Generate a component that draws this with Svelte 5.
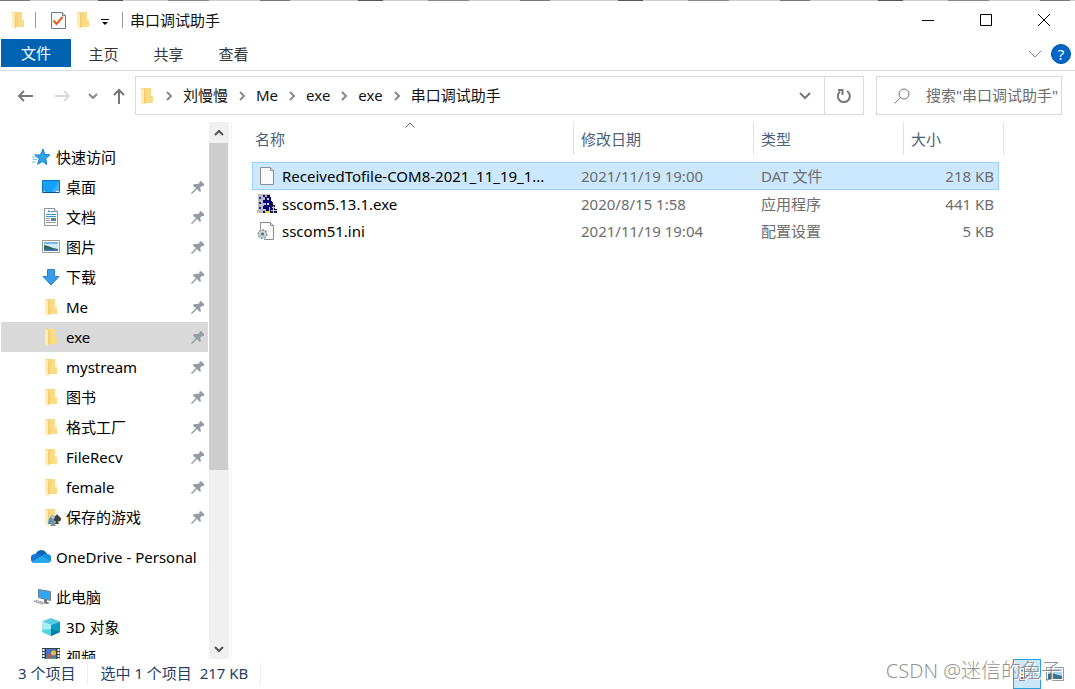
<script>
  const tabs = ['主页', '共享', '查看'];
  const crumbs = ['刘慢慢', 'Me', 'exe', 'exe', '串口调试助手'];
  const places = [
    { name: '快速访问', icon: 'star', root: true },
    { name: '桌面', icon: 'desktop', pin: true },
    { name: '文档', icon: 'doc', pin: true },
    { name: '图片', icon: 'picture', pin: true },
    { name: '下载', icon: 'download', pin: true },
    { name: 'Me', icon: 'folder', pin: true },
    { name: 'exe', icon: 'folder', pin: true, active: true },
    { name: 'mystream', icon: 'folder', pin: true },
    { name: '图书', icon: 'folder', pin: true },
    { name: '格式工厂', icon: 'folder', pin: true },
    { name: 'FileRecv', icon: 'folder', pin: true },
    { name: 'female', icon: 'folder', pin: true },
    { name: '保存的游戏', icon: 'games', pin: true },
    { name: 'OneDrive - Personal', icon: 'cloud', root: true },
    { name: '此电脑', icon: 'pc', root: true },
    { name: '3D 对象', icon: 'cube' },
    { name: '视频', icon: 'video' }
  ];
  const files = [
    { name: 'ReceivedTofile-COM8-2021_11_19_1...', date: '2021/11/19 19:00', type: 'DAT 文件', size: '218 KB', icon: 'file' },
    { name: 'sscom5.13.1.exe', date: '2020/8/15 1:58', type: '应用程序', size: '441 KB', icon: 'app' },
    { name: 'sscom51.ini', date: '2021/11/19 19:04', type: '配置设置', size: '5 KB', icon: 'ini' }
  ];
  let selected = $state(0);
</script>

{#snippet icon(kind)}
  <svg class="icon" viewBox="0 0 20 20" aria-hidden="true">
    {#if kind === 'folder' || kind === 'games'}
      <path d="M4 2h10v8h2v7H5z" fill="#f7d57c" />
      <path d="M10 2h4v8h2v7h-6z" fill="#fbdc86" />
      <path d="M4 2l4 2v14l-1 1-3-2z" fill="#ffebb3" />
      <path d="M7.500 4v14" stroke="#f3cd6b" />
      {#if kind === 'games'}
        <path d="M8 12l3-4 2 1-3 8H7z" fill="#3b8fd0" />
        <path d="M16 7c-1 2-4 3-4 5 0 2 2 3 3 2l-1 3h4l-1-3c2 1 3 0 3-2s-3-3-4-5z" fill="#3c4146" />
        <circle cx="12" cy="10" r="2" fill="#b5c0c8" />
        <path d="M11 12h2l1 5 1 2H9l1-2z" fill="#84919a" />
      {/if}
    {:else if kind === 'star'}
      <path d="M12 2l1.800 5.500 5.200.300-4.200 3.700 1 6-4.300-2.900-5 2.700 1.800-5.500L4 8h5.500z" fill="#2ea3ea" stroke="#1683cb" />
      <path d="M3 7.500h4M1 10h5M2 12.500h4M1 15h4" stroke="#70c4f5" />
    {:else if kind === 'desktop'}
      <path d="M1.500 3.500h17v12h-17z" fill="#18a0f6" stroke="#0877c1" />
      <path d="M11 15L18 5v10z" fill="#42b4fb" />
      <path d="M2 15.500h16" stroke="#084f91" />
      <path d="M3 14.500h1M15 14.500h3" stroke="#fff" />
    {:else if kind === 'doc'}
      <path d="M3.500 1.500h10l3 3v14h-13z" fill="#fff" stroke="#8e9395" />
      <path d="M13.500 1.500v3h3" fill="#eee" stroke="#8e9395" />
      <path d="M7 5.500l1-2 1 2M10 4.500h3M5 7.500h10M5 9.500h10" stroke="#2e96d4" fill="none" />
      <path d="M5 11.500h4M5 13.500h4M5 15.500h10" stroke="#999" />
      <path d="M10 11h5v3h-5z" fill="#4f899d" />
    {:else if kind === 'picture'}
      <path d="M1.500 3.500h17v12h-17z" fill="#fff" stroke="#999" />
      <path d="M3 5h14v9H3z" fill="#cdeaf9" />
      <path d="M3 5h14v2H3z" fill="#76b8ef" />
      <path d="M3 8l4 1 5 2 5 1v1H3z" fill="#38634f" />
      <path d="M3 12h14v2H3z" fill="#3b75ac" />
    {:else if kind === 'download'}
      <path d="M6.500 2.500h7v7h4.500L10 18 2 9.500h4.500z" fill="#3b9ae9" stroke="#2880ce" />
    {:else if kind === 'cloud'}
      <path d="M4.500 8a6 6 0 0 1 11-2A5 5 0 0 1 17 8L8 14z" fill="#0364b8" />
      <path d="M4 16a4.500 4.500 0 0 1 0-9C7 6 9 8 12 10l-7 6z" fill="#0f78d4" />
      <path d="M10.500 9.500C12 7 14 6 16 7a4.500 4.500 0 0 1 0 9h-3z" fill="#1490df" />
      <path d="M1 14.500l9.500-5.500L19.500 14c-.7 1.500-2 2-3.500 2H4.500C3 16 1.500 15.500 1 14.500z" fill="#28a8ea" />
    {:else if kind === 'pc'}
      <path d="M7.500 2.500l12 2v9l-12-3z" fill="#31a8f2" stroke="#6f7e88" />
      <path d="M13 12l3 1v2l3 1-3 1-5-1 2-1z" fill="#67747b" />
      <path d="M1 14l4-1 10 3-4 2z" fill="#c6cace" />
      <path d="M3 14.500l9 2M5 13.500l8 2" stroke="#8f969a" stroke-dasharray="1 1" />
    {:else if kind === 'cube'}
      <path d="M10 1l9 3.500-9 3.500-9-3.500z" fill="#57cde2" />
      <path d="M1 4.500L10 8v11l-9-4z" fill="#a7eef2" />
      <path d="M19 4.500L10 8v11l9-4z" fill="#079ec2" />
      <path d="M1 13l9-1v7l-9-4z" fill="#53d4df" />
      <path d="M10 12l9 3-9 4z" fill="#007ca6" />
    {:else if kind === 'video'}
      <path d="M1 1h18v17H1z" fill="#3b4043" />
      <path d="M2.500 2v16M17.500 2v16" stroke="#fff" stroke-width="2" stroke-dasharray="2 1" />
      <path d="M5 2h10v12H5z" fill="#4776c4" />
      <circle cx="12.500" cy="6" r="2.500" fill="#edbd38" />
      <circle cx="8" cy="9" r="2" fill="#d34c4b" />
      <path d="M5 11h10v2H5z" fill="#60a350" />
    {:else if kind === 'file' || kind === 'ini'}
      <path d="M3.500 1.500h10l3 3v14h-13z" fill="#fafafa" stroke="#8c8f91" />
      <path d="M13.500 1.500v3h3" fill="#ddd" stroke="#8c8f91" />
      {#if kind === 'ini'}
        <path d="M1 8h6v11H1z" fill="#fff" />
        <circle cx="5.500" cy="13" r="4" fill="#bcc6cc" stroke="#89969e" stroke-width="2" stroke-dasharray="2 1" />
        <circle cx="5.500" cy="13" r="3.500" fill="#c9d2d7" />
        <circle cx="5.500" cy="13" r="1.500" fill="#526773" />
      {/if}
    {:else if kind === 'app'}
      <path d="M1 0h12v19H0V16h1z" fill="#bdbdbd" />
      <path d="M2 3h2v2H2zM2 8h2v2H2zM2 13h2v2H2z" fill="#2020e8" />
      <path d="M6 1h2v2H6zM10 1h3v2h1v4h1v6h-3v6H9v-4H7v-4h2V9H6V6h2V3h2z" fill="#080875" />
      <path d="M6 12h2v3H6zM6 17h2v2H6z" fill="#080875" />
      <path d="M10 4h2v2h-2zM10 9h2v2h-2z" fill="#d1d1d1" />
      <path d="M9 17h4v2H9z" fill="#f5df17" />
      <path d="M13 10h2V8h1v3h2v4h2v4h-7z" fill="#14144c" />
      <path d="M15 13.500h3M14 16.500h6M16.500 12v7" stroke="#c7c7c7" />
    {/if}
  </svg>
{/snippet}

{#snippet chevron()}
  <svg class="chev" viewBox="0 0 8 10" aria-hidden="true"><path d="M2 1l4 4-4 4" /></svg>
{/snippet}

<div class="window">
  <div class="strip"></div>
  <header class="title">
    {@render icon('folder')}
    <i class="bar"></i>
    <button class="quick" aria-label="属性">
      <svg width="16" height="20" viewBox="0 0 16 20"><path d="M1.500 2.500h11l3 3v13h-14z" fill="#f7f8fa" stroke="#777c82" /><path d="M12.500 2.500v3h3" fill="#ddd" stroke="#777c82" /><path d="M3.500 10.500l3 3.500 6-7" fill="none" stroke="#f05a1a" stroke-width="2" /></svg>
    </button>
    <button class="quick" aria-label="新建文件夹">{@render icon('folder')}</button>
    <button class="quick drop" aria-label="自定义"><svg width="8" height="8" viewBox="0 0 8 8"><path d="M0 1.500h8" stroke="#000" /><path d="M1 4h6L4 7z" /></svg></button>
    <i class="bar second"></i>
    <h1>串口调试助手</h1>
    <div class="controls">
      <button aria-label="最小化"><svg viewBox="0 0 14 14"><path d="M1 7.500h12" /></svg></button>
      <button aria-label="最大化"><svg viewBox="0 0 14 14"><path d="M1.500 1.500h11v11h-11z" /></svg></button>
      <button aria-label="关闭"><svg viewBox="0 0 14 14"><path d="M1 1l12 12M13 1L1 13" /></svg></button>
    </div>
  </header>

  <nav class="ribbon">
    <button class="filetab">文件</button>
    {#each tabs as t}<button class="tab">{t}</button>{/each}
    <button class="expand" aria-label="展开功能区"><svg width="14" height="8" viewBox="0 0 14 8"><path d="M1 1l6 6 6-6" fill="none" stroke="#8a8a8a" /></svg></button>
    <button class="help" aria-label="帮助">?</button>
  </nav>

  <div class="address">
    <div class="arrows">
      <button aria-label="后退"><svg width="16" height="14" viewBox="0 0 16 14"><path d="M16 7H2M7 2L2 7l5 5" stroke="#777" /></svg></button>
      <button aria-label="前进"><svg width="16" height="14" viewBox="0 0 16 14"><path d="M0 7h14M9 2l5 5-5 5" stroke="#d9d9d9" /></svg></button>
      <button class="small" aria-label="最近位置"><svg width="10" height="6" viewBox="0 0 10 6"><path d="M1 1l4 4 4-4" stroke="#888" /></svg></button>
      <button class="small" aria-label="向上"><svg width="14" height="16" viewBox="0 0 14 16"><path d="M7 16V2M2 7l5-5 5 5" stroke="#777" /></svg></button>
    </div>
    <div class="path">
      {@render icon('folder')}
      {#each crumbs as c}{@render chevron()}<a href="#path">{c}</a>{/each}
      <button class="history" aria-label="历史记录"><svg width="12" height="8" viewBox="0 0 12 8"><path d="M1 1l5 5 5-5" stroke="#777" stroke-width="2" fill="none" /></svg></button>
      <button class="refresh" aria-label="刷新"><svg width="16" height="16" viewBox="0 0 16 16"><path d="M11 3a6 6 0 1 1-7 .500M2 2h4.500v5" fill="none" stroke="#777" stroke-width="2" /></svg></button>
    </div>
    <label class="search">
      <svg width="16" height="16" viewBox="0 0 16 16"><circle cx="10" cy="6" r="5" /><path d="M6.500 9.500L.500 15.500" /></svg>
      <input type="text" aria-label="搜索" placeholder={'搜索"串口调试助手"'} />
    </label>
  </div>

  <div class="body">
    <nav class="places">
      {#each places as p}
        <a href="#place" class:root={p.root} class:active={p.active}>
          {@render icon(p.icon)}
          <span>{p.name}</span>
          {#if p.pin}
            <svg class="pin" viewBox="0 0 14 14" aria-hidden="true"><path d="M8 2l2-1 3 3v2h-2L9 8l1 3-1 1-3-3-5 5-1-1 5-5-3-2 1-2h3l3-1z" /></svg>
          {/if}
        </a>
      {/each}
    </nav>
    <div class="scroll">
      <button aria-label="向上滚动"><svg width="10" height="8" viewBox="0 0 10 8"><path d="M1 6l4-4 4 4" /></svg></button>
      <div class="track"><div class="thumb"></div></div>
      <button aria-label="向下滚动"><svg width="10" height="8" viewBox="0 0 10 8"><path d="M1 2l4 4 4-4" /></svg></button>
    </div>
    <main>
      <table>
        <thead>
          <tr>
            <th>名称<svg class="sort" width="10" height="6" viewBox="0 0 10 6"><path d="M.500 5.500L5 1l4.500 4.500" fill="none" stroke="#666" /></svg></th>
            <th>修改日期</th><th>类型</th><th>大小</th>
          </tr>
        </thead>
        <tbody>
          {#each files as f, i}
            <tr class:selected={selected === i} onclick={() => (selected = i)}>
              <td class="name">{@render icon(f.icon)}<span>{f.name}</span></td>
              <td>{f.date}</td><td>{f.type}</td><td class="size">{f.size}</td>
            </tr>
          {/each}
        </tbody>
      </table>
    </main>
  </div>

  <footer>
    <span class="count">3 个项目</span>
    <span class="picked">选中 1 个项目&nbsp; 217 KB</span>
    <div class="views">
      <button class="on" aria-label="详细信息"><svg width="18" height="16" viewBox="0 0 18 16"><path d="M1.500 1.500h5v13h-5z" fill="#fff" stroke="#888" /><path d="M3 4.500h2" stroke="#39c" stroke-width="2" /><path d="M3 8.500h2" stroke="#c93" stroke-width="2" /><path d="M3 12h2" stroke="#c33" stroke-width="2" /><path d="M8 3.500h9M8 6.500h9M8 9.500h9M8 12.500h9" stroke="#999" /></svg></button>
      <button aria-label="大图标"><svg width="18" height="14" viewBox="0 0 18 14"><path d="M.500.500h17v13H.500z" fill="#fff" stroke="#999" /><path d="M2 2h14v10H2z" fill="#a8d5ef" /><path d="M2 7l4-1 6 2 4 1v3H2z" fill="#3d7190" /></svg></button>
    </div>
    <span class="mark">CSDN @迷信的兔子</span>
  </footer>
</div>

<style>
  :global(body) { margin: 0; background: #fff; }
  .window {
    position: relative;
    display: flex;
    flex-direction: column;
    height: 100vh;
    overflow: hidden;
    color: #111;
    font: 15px/20px "Noto Sans", "Noto Sans CJK SC", sans-serif;
  }
  button { display: flex; align-items: center; justify-content: center; padding: 0; border: 0; background: none; color: inherit; font: inherit; }
  a { color: inherit; text-decoration: none; }
  svg { flex: none; display: block; }
  .icon { width: 20px; height: 20px; }
  .strip {
    flex: none;
    height: 1px;
    background: linear-gradient(90deg, #777 0 30px, #ccc 0 98px, #555 0 123px, #ccc 0 168px, #888 0 209px, #ccc 0 260px) 0 0 / 260px 1px;
  }
  .title { flex: none; display: flex; align-items: center; height: 38px; padding-left: 8px; }
  .bar { width: 1px; height: 16px; margin: 0 14px 0 7px; background: #999; }
  .bar.second { margin: 0 7px 0 0; }
  .quick + .quick { margin-left: 7px; }
  .quick.drop { margin: 4px 13px 0 8px; }
  h1 { margin: 0; font-size: 15px; font-weight: 400; }
  .controls { display: flex; margin-left: auto; padding-right: 2px; }
  .controls button { width: 58px; height: 38px; }
  .controls svg { width: 14px; height: 14px; fill: none; stroke: #000; }
  .ribbon { flex: none; display: flex; align-items: flex-start; height: 31px; padding: 0 4px 0 1px; border-bottom: 1px solid #dadada; color: #333; }
  .filetab { width: 70px; height: 28px; background: #0063b1; color: #fff; }
  .tab { width: 65px; height: 30px; }
  .expand { height: 30px; margin-left: auto; }
  .help { width: 20px; height: 20px; margin: 5px 0 0 9px; border: 1px solid #004f98; border-radius: 50%; background: #0066cc; color: #fff; }
  .address { flex: none; display: flex; height: 39px; padding: 5px 13px 7px 0; }
  .arrows { display: flex; width: 135px; padding-left: 6px; box-sizing: border-box; }
  .arrows button { width: 38px; }
  .arrows .small { width: 22px; }
  .arrows .small + .small { width: 30px; }
  .arrows svg { fill: none; stroke-width: 2; }
  .path { flex: 1; display: flex; align-items: center; min-width: 0; border: 1px solid #d9d9d9; }
  .path .icon { margin: 0 8px 0 1px; }
  .path a { padding-bottom: 2px; }
  .chev { width: 8px; height: 10px; margin: 0 10px; fill: none; stroke: #888; stroke-width: 2; }
  .path .icon + .chev { margin-left: 0; }
  .history { width: 38px; margin-left: auto; align-self: stretch; }
  .refresh { width: 39px; align-self: stretch; border-left: 1px solid #d9d9d9; }
  .search { display: flex; align-items: center; box-sizing: border-box; width: 186px; margin-left: 12px; padding-left: 17px; border: 1px solid #d9d9d9; }
  .search svg { fill: none; stroke: #777; }
  .search input { flex: 1; min-width: 0; margin-left: 16px; padding: 0 0 2px; border: 0; outline: 0; background: none; font: inherit; }
  .search input::placeholder { color: #6d6d6d; opacity: 1; }
  .body { flex: 1; display: flex; min-height: 0; }
  .places { box-sizing: border-box; width: 209px; padding: 20px 1px 0 1px; overflow: hidden; color: #000; }
  .places a { display: flex; align-items: center; height: 30px; padding: 0 3px 0 40px; }
  .places a.root { padding-left: 30px; }
  .places a.root:not(:first-child) { margin-top: 10px; }
  .places a.active { background: #d9d9d9; }
  .places span { margin-left: 5px; white-space: nowrap; }
  .pin { width: 14px; height: 14px; margin-left: auto; fill: #929da5; }
  .scroll { display: flex; flex-direction: column; width: 20px; background: #f0f0f0; }
  .scroll button { height: 21px; }
  .scroll svg { fill: none; stroke: #555; stroke-width: 2; }
  .track { flex: 1; }
  .thumb { width: 19px; height: 66%; background: #cdcdcd; }
  main { flex: 1; min-width: 0; margin-left: 2px; padding-left: 20px; border-left: 1px solid #f5f5f5; overflow: hidden; }
  table, thead, tbody { display: block; }
  tr { display: grid; grid-template-columns: 322px 180px 150px 100px; box-sizing: border-box; }
  tbody tr { grid-template-columns: 321px 180px 150px 94px; width: 747px; height: 27px; border: 1px solid transparent; }
  thead { margin-bottom: 7px; }
  th { position: relative; display: flex; align-items: center; box-sizing: border-box; height: 33px; padding: 0 0 0 7px; border-right: 1px solid #e2e2e2; color: #4c607a; font-weight: 400; }
  th:first-child { padding-left: 3px; }
  .sort { position: absolute; left: 50%; top: 0; margin-left: -8px; }
  td { display: flex; align-items: center; min-width: 0; padding: 0 4px 0 7px; color: #6d6d6d; }
  td.name { padding: 0 6px 0 4px; color: #000; }
  td.name span { margin-left: 5px; white-space: nowrap; }
  td.size { justify-content: flex-end; }
  tbody tr.selected { height: 28px; border-color: #99d1ff; background: #cce8ff; }
  footer { position: relative; flex: none; display: flex; align-items: center; box-sizing: border-box; height: 30px; padding: 0 6px 0 18px; color: #243f66; }
  footer > span { padding-bottom: 2px; white-space: nowrap; }
  footer .count { padding-right: 12px; border-right: 1px solid #eee; }
  footer .picked { padding-left: 12px; padding-right: 12px; border-right: 1px solid #eee; }
  .views { display: flex; margin-left: auto; }
  .views button { width: 28px; height: 30px; }
  .views .on { box-sizing: border-box; border: 1px solid #2a9fd8; background: #cce8f8; }
  .mark { position: absolute; right: 14px; bottom: 2px; color: #777c; font-size: 20px; font-weight: 300; line-height: 28px; text-shadow: 1px 1px 0 #fff; }
</style>
